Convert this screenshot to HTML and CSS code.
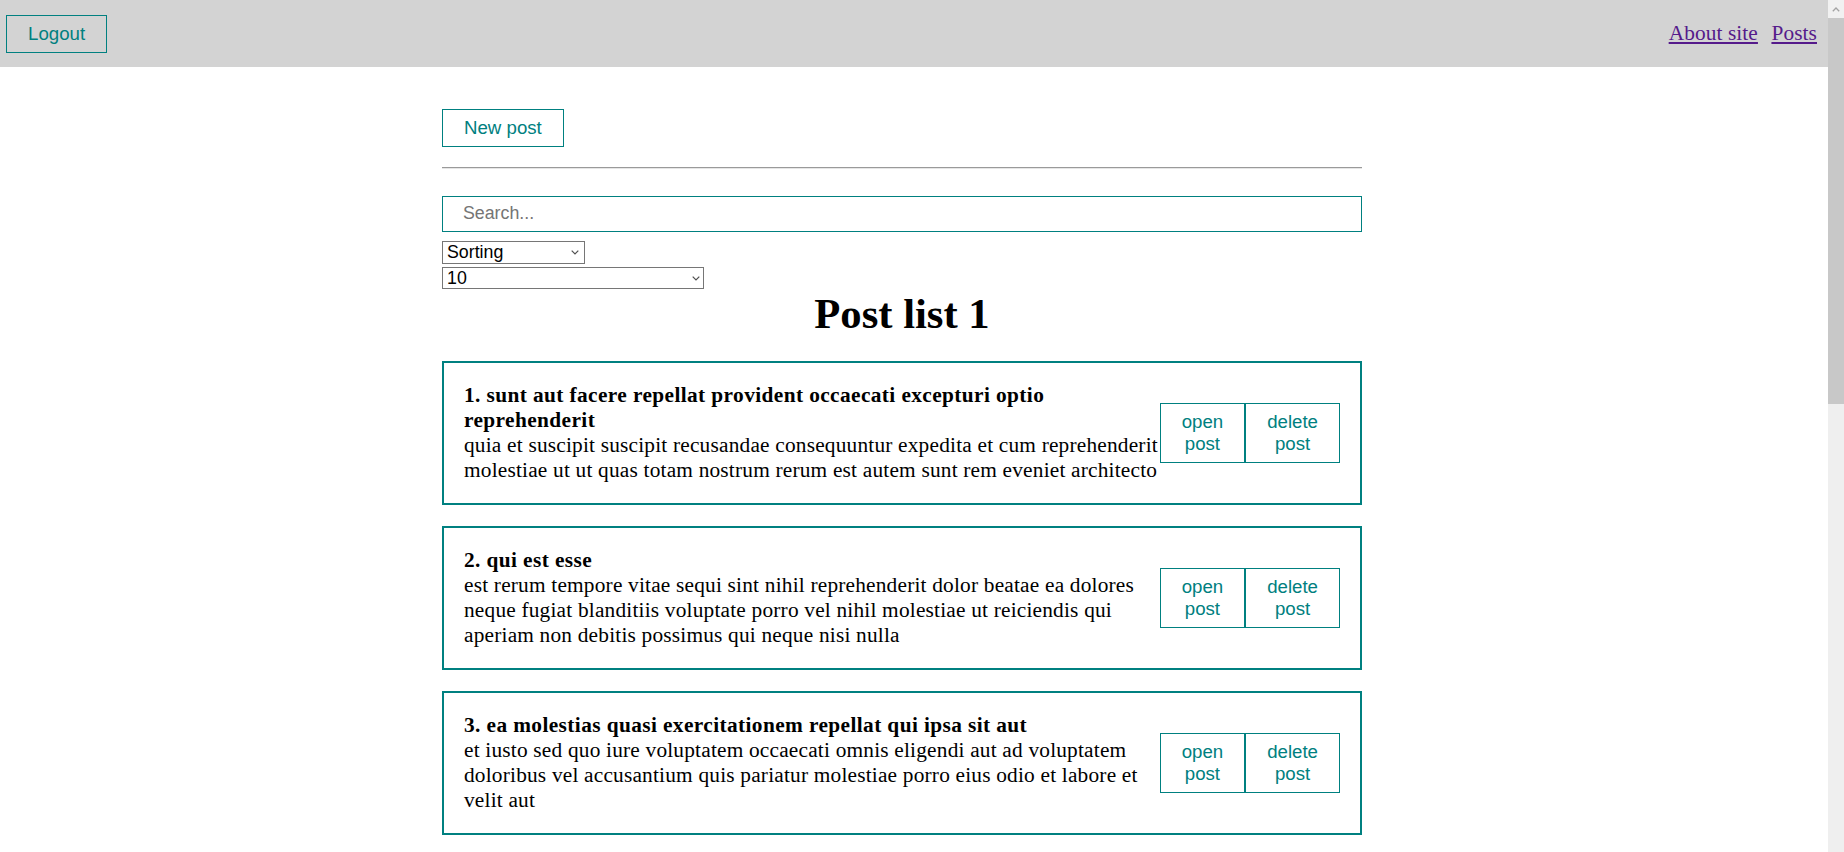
FILE: index.html
```html
<!DOCTYPE html>
<html lang="en">
<head>
<meta charset="utf-8">
<title>Posts</title>
<link rel="stylesheet" href="styles.css">
</head>
<body>
<nav class="navbar">
  <button class="btn">Logout</button>
  <div class="navbar__links">
    <a href="#about" class="navbar__link">About site</a>
    <a href="#posts" class="navbar__link">Posts</a>
  </div>
</nav>
<main class="app">
  <button class="btn btn--new">New post</button>
  <hr class="divider">
  <div class="filter">
    <input class="input" type="text" placeholder="Search...">
    <div class="select-wrap select-wrap--sort">
      <select class="select">
        <option>Sorting</option>
        <option>By title</option>
        <option>By body</option>
      </select>
      <svg class="chevron" width="8" height="5" viewBox="0 0 8 5"><polyline points="0.7,0.7 4,4 7.3,0.7" fill="none" stroke="#505050" stroke-width="1.2"/></svg>
    </div>
    <div class="select-wrap select-wrap--limit">
      <select class="select">
        <option>10</option>
        <option>5</option>
        <option>25</option>
      </select>
      <svg class="chevron" width="8" height="5" viewBox="0 0 8 5"><polyline points="0.7,0.7 4,4 7.3,0.7" fill="none" stroke="#505050" stroke-width="1.2"/></svg>
    </div>
  </div>
  <h1 class="list-title">Post list 1</h1>
  <div class="post-list">
    <div class="post">
      <div class="post__content">
        <strong>1. sunt aut facere repellat provident occaecati excepturi optio reprehenderit</strong>
        <div>quia et suscipit suscipit recusandae consequuntur expedita et cum reprehenderit molestiae ut ut quas totam nostrum rerum est autem sunt rem eveniet architecto</div>
      </div>
      <div class="post__btns">
        <button class="btn btn--post">open post</button>
        <button class="btn btn--post">delete post</button>
      </div>
    </div>
    <div class="post">
      <div class="post__content">
        <strong>2. qui est esse</strong>
        <div>est rerum tempore vitae sequi sint nihil reprehenderit dolor beatae ea dolores neque fugiat blanditiis voluptate porro vel nihil molestiae ut reiciendis qui aperiam non debitis possimus qui neque nisi nulla</div>
      </div>
      <div class="post__btns">
        <button class="btn btn--post">open post</button>
        <button class="btn btn--post">delete post</button>
      </div>
    </div>
    <div class="post">
      <div class="post__content">
        <strong>3. ea molestias quasi exercitationem repellat qui ipsa sit aut</strong>
        <div>et iusto sed quo iure voluptatem occaecati omnis eligendi aut ad voluptatem doloribus vel accusantium quis pariatur molestiae porro eius odio et labore et velit aut</div>
      </div>
      <div class="post__btns">
        <button class="btn btn--post">open post</button>
        <button class="btn btn--post">delete post</button>
      </div>
    </div>
    <div class="post">
      <div class="post__content">
        <strong>4. eum et est occaecati</strong>
        <div>ullam et saepe reiciendis voluptatem adipisci sit amet autem assumenda provident rerum culpa quis hic commodi nesciunt rem tenetur doloremque ipsam iure quis sunt voluptatem rerum illo velit</div>
      </div>
      <div class="post__btns">
        <button class="btn btn--post">open post</button>
        <button class="btn btn--post">delete post</button>
      </div>
    </div>
    <div class="post">
      <div class="post__content">
        <strong>5. nesciunt quas odio</strong>
        <div>repudiandae veniam quaerat sunt sed alias aut fugiat sit autem sed est voluptatem omnis possimus esse voluptatibus quis est aut tenetur dolor neque</div>
      </div>
      <div class="post__btns">
        <button class="btn btn--post">open post</button>
        <button class="btn btn--post">delete post</button>
      </div>
    </div>
    <div class="post">
      <div class="post__content">
        <strong>6. dolorem eum magni eos aperiam quia</strong>
        <div>ut aspernatur corporis harum nihil quis provident sequi mollitia nobis aliquid molestiae perspiciatis et ea nemo ab reprehenderit accusantium quas voluptate dolores velit et doloremque molestiae</div>
      </div>
      <div class="post__btns">
        <button class="btn btn--post">open post</button>
        <button class="btn btn--post">delete post</button>
      </div>
    </div>
    <div class="post">
      <div class="post__content">
        <strong>7. magnam facilis autem</strong>
        <div>dolore placeat quibusdam ea quo vitae magni quis enim qui quis quo nemo aut saepe quidem repellat excepturi ut quia sunt ut sequi eos ea sed quas</div>
      </div>
      <div class="post__btns">
        <button class="btn btn--post">open post</button>
        <button class="btn btn--post">delete post</button>
      </div>
    </div>
    <div class="post">
      <div class="post__content">
        <strong>8. dolorem dolore est ipsam</strong>
        <div>dignissimos aperiam dolorem qui eum facilis quibusdam animi sint suscipit qui sint possimus cum quaerat magni maiores excepturi ipsam ut commodi dolor voluptatum modi aut vitae</div>
      </div>
      <div class="post__btns">
        <button class="btn btn--post">open post</button>
        <button class="btn btn--post">delete post</button>
      </div>
    </div>
  </div>
</main>
<aside class="scrollbar" aria-hidden="true">
  <div class="scrollbar__arrow">
    <svg width="8" height="5" viewBox="0 0 8 5"><polyline points="0.8,4.3 4,1 7.2,4.3" fill="none" stroke="#a3a3a3" stroke-width="1.3"/></svg>
  </div>
  <div class="scrollbar__thumb"></div>
</aside>
</body>
</html>
```

FILE: styles.css
```css
* {
  margin: 0;
  padding: 0;
  box-sizing: border-box;
}

body {
  font-family: "Liberation Serif", "Times New Roman", serif;
  font-size: 21.33px;
  color: #000;
  background: #fff;
  padding-right: 16px;
}

.scrollbar {
  position: fixed;
  top: 0;
  right: 0;
  width: 16px;
  height: 100vh;
  background: #efefef;
  display: flex;
  flex-direction: column;
}

.scrollbar__arrow {
  height: 18px;
  display: flex;
  align-items: center;
  justify-content: center;
  background: #f1f1f1;
}

.scrollbar__thumb {
  height: 386px;
  background: #c8c8c8;
}

.navbar {
  height: 67px;
  display: flex;
  align-items: center;
  padding: 0 11px 0 6px;
  background: #d3d3d3;
}

.navbar__links {
  margin-left: auto;
  display: flex;
  gap: 13.5px;
}

.navbar__link {
  color: #551a8b;
  text-decoration: underline;
  letter-spacing: 0.1px;
}

.btn {
  font-family: "Liberation Sans", Arial, sans-serif;
  font-size: 18.67px;
  color: #008080;
  background: transparent;
  border: 1px solid #008080;
  padding: 7px 21px;
  cursor: pointer;
}

.btn--new {
  margin-top: 42px;
}

.app {
  width: 920px;
  margin-left: 442px;
  padding-bottom: 143px;
}

.divider {
  height: 0;
  border: none;
  border-top: 1px solid #9a9a9a;
  border-bottom: 1px solid #e6e6e6;
  margin: 20px 0;
}

.filter {
  display: flex;
  flex-direction: column;
  align-items: flex-start;
}

.input {
  width: 100%;
  font-family: "Liberation Sans", Arial, sans-serif;
  font-size: 17.78px;
  padding: 6.67px 20px;
  margin: 6.67px 0;
  border: 1px solid #008080;
  outline: none;
  color: #000;
}

.input::placeholder {
  color: #757575;
}

.select-wrap {
  position: relative;
  display: flex;
}

.select-wrap--sort {
  margin-top: 2px;
}

.select-wrap--limit {
  margin-top: 3px;
}

.select {
  appearance: none;
  -webkit-appearance: none;
  font-family: "Liberation Sans", Arial, sans-serif;
  font-size: 17.78px;
  color: #000;
  background: #fff;
  border: 1px solid #767676;
  border-radius: 0;
  padding: 0 0 0 4px;
  height: 23px;
  line-height: 21px;
}

.select-wrap--sort .select {
  width: 143px;
}

.select-wrap--limit .select {
  width: 262px;
  height: 22px;
}

.chevron {
  position: absolute;
  top: 50%;
  right: 6px;
  margin-top: -2px;
  pointer-events: none;
}

.select-wrap--limit .chevron {
  right: 4px;
}

.list-title {
  text-align: center;
  font-size: 42.67px;
  font-weight: bold;
}

.post-list {
  display: flex;
  flex-direction: column;
  gap: 21px;
  margin-top: 23px;
}

.post {
  display: flex;
  justify-content: space-between;
  align-items: center;
  padding: 20px;
  border: 2.67px solid #008080;
}

.post__content {
  flex: 1;
  min-width: 0;
  letter-spacing: 0.2px;
}

.post__content strong {
  letter-spacing: 0.4px;
}

.post__btns {
  display: flex;
  flex: none;
}

.btn--post {
  width: min-content;
  line-height: normal;
}
```
